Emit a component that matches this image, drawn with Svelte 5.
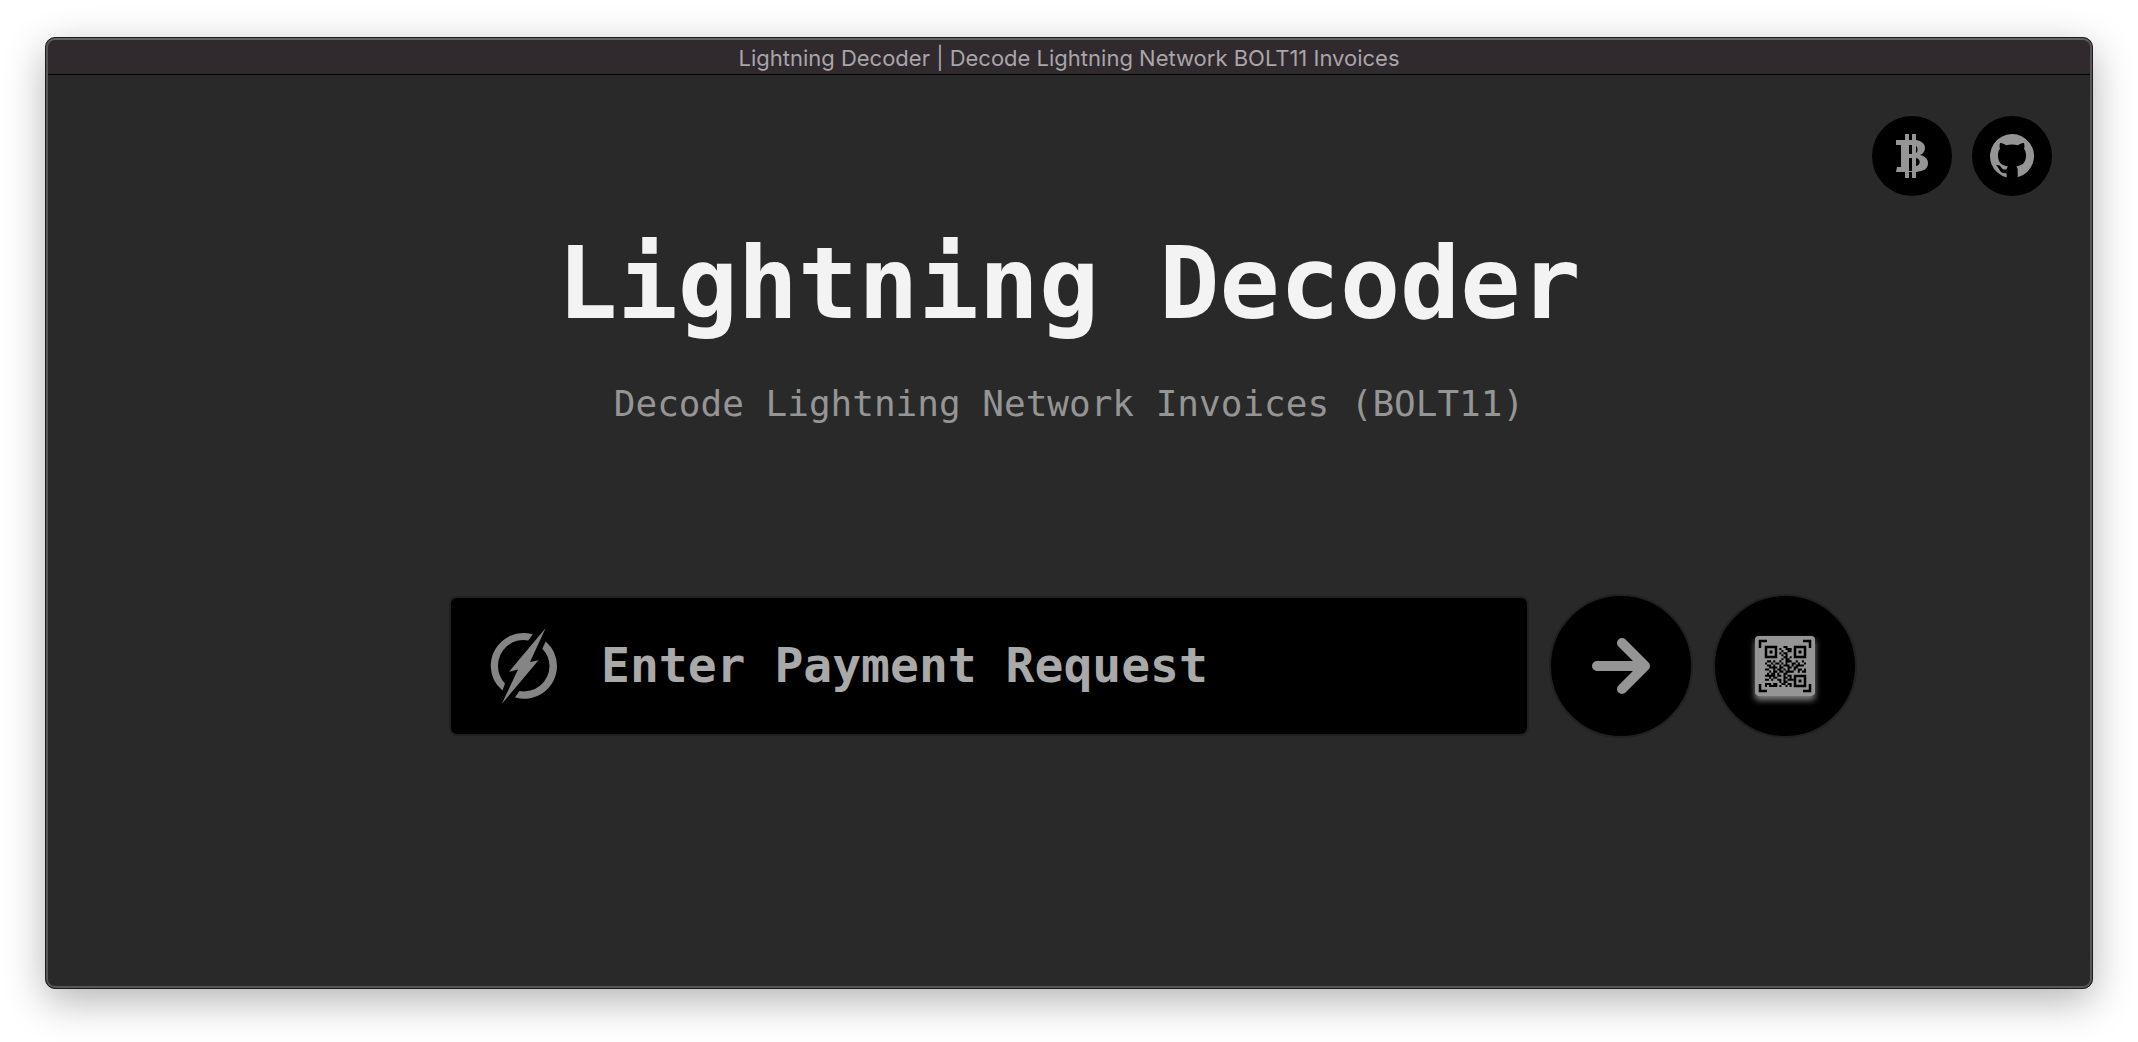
<script>
  let request = $state('');

  // Scan-code pattern, one string per row; "#" is a dark module.
  // The three finder squares are drawn separately.
  const modules = [
    '.........##.........',
    '.......#..###.......',
    '........#..##.......',
    '.......#.##.........',
    '........#.#.........',
    '.........##.#.......',
    '........#.##........',
    '.##.#..#..###..#..#.',
    '#..#.##.#.#..##.#..#',
    '.##.#..#.###.#.####.',
    '..####.##..##.##....',
    '##..#.##.#.#..#.##.#',
    '..#.##.##.####..#.##',
    '.#.##.#..##.........',
    '#####.##.#.##.......',
    '..#.##...##.#.......',
    '##.#..##.#.###......',
    '.......#.##.........',
    '###.##..##.##.......',
    '#.####.#..#.#.......'
  ];
  const qrPath = modules
    .flatMap((row, y) => [...row].map((c, x) => (c === '#' ? `M${x} ${y}h1v1h-1z` : '')))
    .join('');
</script>

<div class="desktop">
  <div class="window">
    <header class="titlebar">Lightning Decoder | Decode Lightning Network BOLT11 Invoices</header>
    <main>
      <nav aria-label="Links">
        <a class="round small" href="#bitcoin" aria-label="Bitcoin">
          <svg width="32" height="44" viewBox="0 0 32 44" aria-hidden="true">
            <path fill-rule="evenodd" d="M9 0h4v6h3V0h4v6c6 1 9 4 9 8 0 3-2 6-5 7 5 1 8 4 8 8 0 6-4 8-12 9v6h-4v-6h-3v6H9v-6H0l1-5h4V11H0V6h9zM13 11v9h3v-9zM20 12v7c2-1 2-6 0-7zM13 24v13h3V24zM20 24v8c5-1 5-7 0-8z" />
          </svg>
        </a>
        <a class="round small" href="#github" aria-label="GitHub">
          <svg width="44" height="44" viewBox="0 0 44 44" aria-hidden="true">
            <path d="M16.700 43.400A22 22 0 1 1 27.700 43.300V36.500C27.700 34.500 27.200 33.200 26.200 32.300C32.500 31.600 36 28.500 36 21.500C36 18.500 35.200 16.500 34 14.800C34.600 13 34.600 11 33.900 9C32 8.800 30 9.800 28 11.200C24.500 10.400 19.500 10.400 16 11.200C14 9.800 12 8.800 10.100 9C9.400 11 9.400 13 10 14.800C8.600 16.500 8 18.500 8 21.500C8 28.500 11.500 31.600 18 32.300C17.300 33 16.900 34 16.700 35.200C14.500 36 12.500 35.500 11.300 33.500C10 31.300 8.300 30.700 6.200 31.200C6.200 32 8 32.300 9 35C10.300 38.300 12.800 39.900 16.700 39.200Z" />
          </svg>
        </a>
      </nav>

      <h1>Lightning Decoder</h1>
      <p>Decode Lightning Network Invoices (BOLT11)</p>

      <form onsubmit={(e) => e.preventDefault()}>
        <label class="field">
          <svg width="70" height="78" viewBox="0 0 70 78" aria-hidden="true">
            <path d="M43.700 7.300A33 33 0 0 0 1.700 39A33 33 0 0 0 13.500 63.600L16 56.500A25.500 25.500 0 0 1 9 39A25.500 25.500 0 0 1 39.300 13.500Z" />
            <path d="M56.700 14.500A33 33 0 0 1 68 39A33 33 0 0 1 26 70.600L30.300 64A25.500 25.500 0 0 0 60.500 39A25.500 25.500 0 0 0 53.300 21.700Z" />
            <path d="M56.700 1L41 35L49.500 33.300L12.700 77L29 42.500L20 44.700Z" />
          </svg>
          <input type="text" placeholder="Enter Payment Request" aria-label="Payment request" bind:value={request} />
        </label>
        <button class="round large" type="submit" aria-label="Decode">
          <svg width="58" height="56" viewBox="0 0 58 56" aria-hidden="true">
            <path class="arrow" d="M5 28H52M30 5L53 28L30 51" />
          </svg>
        </button>
        <button class="round large" type="button" aria-label="Scan QR code">
          <svg class="qr" width="60" height="60" viewBox="0 0 60 60" aria-hidden="true">
            <rect width="60" height="60" rx="3" />
            <path class="line" d="M5 12V5H12M48 5H55V12M55 48V55H48M12 55H5V48" />
            <path class="line" d="M11 11h10v10h-10zM40 11h10v10h-10zM40 40h10v10h-10z" />
            <path class="ink" d="M14.500 14.500h3v3h-3zM43.500 14.500h3v3h-3zM43.500 43.500h3v3h-3z" />
            <g transform="translate(10 10) scale(2.05)"><path class="ink" d={qrPath} /></g>
          </svg>
        </button>
      </form>
    </main>
  </div>
</div>

<style>
  :global(body) {
    margin: 0;
    background: #fff;
  }
  .desktop {
    box-sizing: border-box;
    min-height: 100vh;
    padding: 37px 45px 53px;
    display: flex;
  }
  .window {
    flex: 1;
    display: flex;
    flex-direction: column;
    position: relative;
    border: 1px solid #1c1c1c;
    border-radius: 10px;
    background: #292929;
    box-shadow: 0 12px 40px rgba(0, 0, 0, 0.3);
    overflow: hidden;
  }
  .window::after {
    content: '';
    position: absolute;
    inset: 0;
    border: 2px solid #575757;
    border-top-color: #656265;
    border-radius: 9px;
    pointer-events: none;
  }
  .titlebar {
    height: 36px;
    border-bottom: 1px solid #000;
    background: #30292e;
    color: #aaa5a9;
    font: 22px/40px Inter, sans-serif;
    text-align: center;
  }
  main {
    flex: 1;
    padding: 41px 40px 0;
    font-family: 'DejaVu Sans Mono', monospace;
    text-align: center;
  }
  nav {
    display: flex;
    justify-content: flex-end;
    gap: 20px;
  }
  svg {
    fill: #959595;
    display: block;
  }
  .round {
    box-sizing: border-box;
    display: flex;
    align-items: center;
    justify-content: center;
    flex: none;
    padding: 0;
    border: 0;
    border-radius: 50%;
    background: #000;
    cursor: pointer;
  }
  .small {
    width: 80px;
    height: 80px;
  }
  .large {
    width: 144px;
    height: 144px;
    border: 2px solid #212121;
  }
  h1 {
    margin: 28px 0 38px;
    color: #f3f3f3;
    font-size: 100px;
    line-height: 120px;
    font-weight: 700;
  }
  p {
    margin: 0;
    color: #959595;
    font-size: 36px;
    line-height: 44px;
  }
  form {
    display: flex;
    align-items: center;
    justify-content: center;
    gap: 20px;
    margin-top: 168px;
    padding-left: 168px;
  }
  .field {
    box-sizing: border-box;
    flex: 0 1 1080px;
    min-width: 0;
    height: 140px;
    display: flex;
    align-items: center;
    gap: 42px;
    padding: 0 40px 0 38px;
    border: 2px solid #212121;
    border-radius: 8px;
    background: #000;
  }
  .field svg {
    fill: #858585;
    flex: none;
  }
  input {
    flex: 1;
    min-width: 0;
    padding: 0 0 2px;
    border: 0;
    outline: 0;
    background: transparent;
    color: #f3f3f3;
    font: 700 48px/60px 'DejaVu Sans Mono', monospace;
  }
  input::placeholder {
    color: #a9a9a9;
    opacity: 1;
  }
  .arrow {
    fill: none;
    stroke: #959595;
    stroke-width: 10;
    stroke-linecap: round;
    stroke-linejoin: round;
  }
  .qr {
    border-radius: 3px;
    box-shadow: 0 4px 6px #858585;
  }
  .line {
    fill: none;
    stroke: #000;
    stroke-width: 2.5;
  }
  .ink {
    fill: #000;
  }
</style>
